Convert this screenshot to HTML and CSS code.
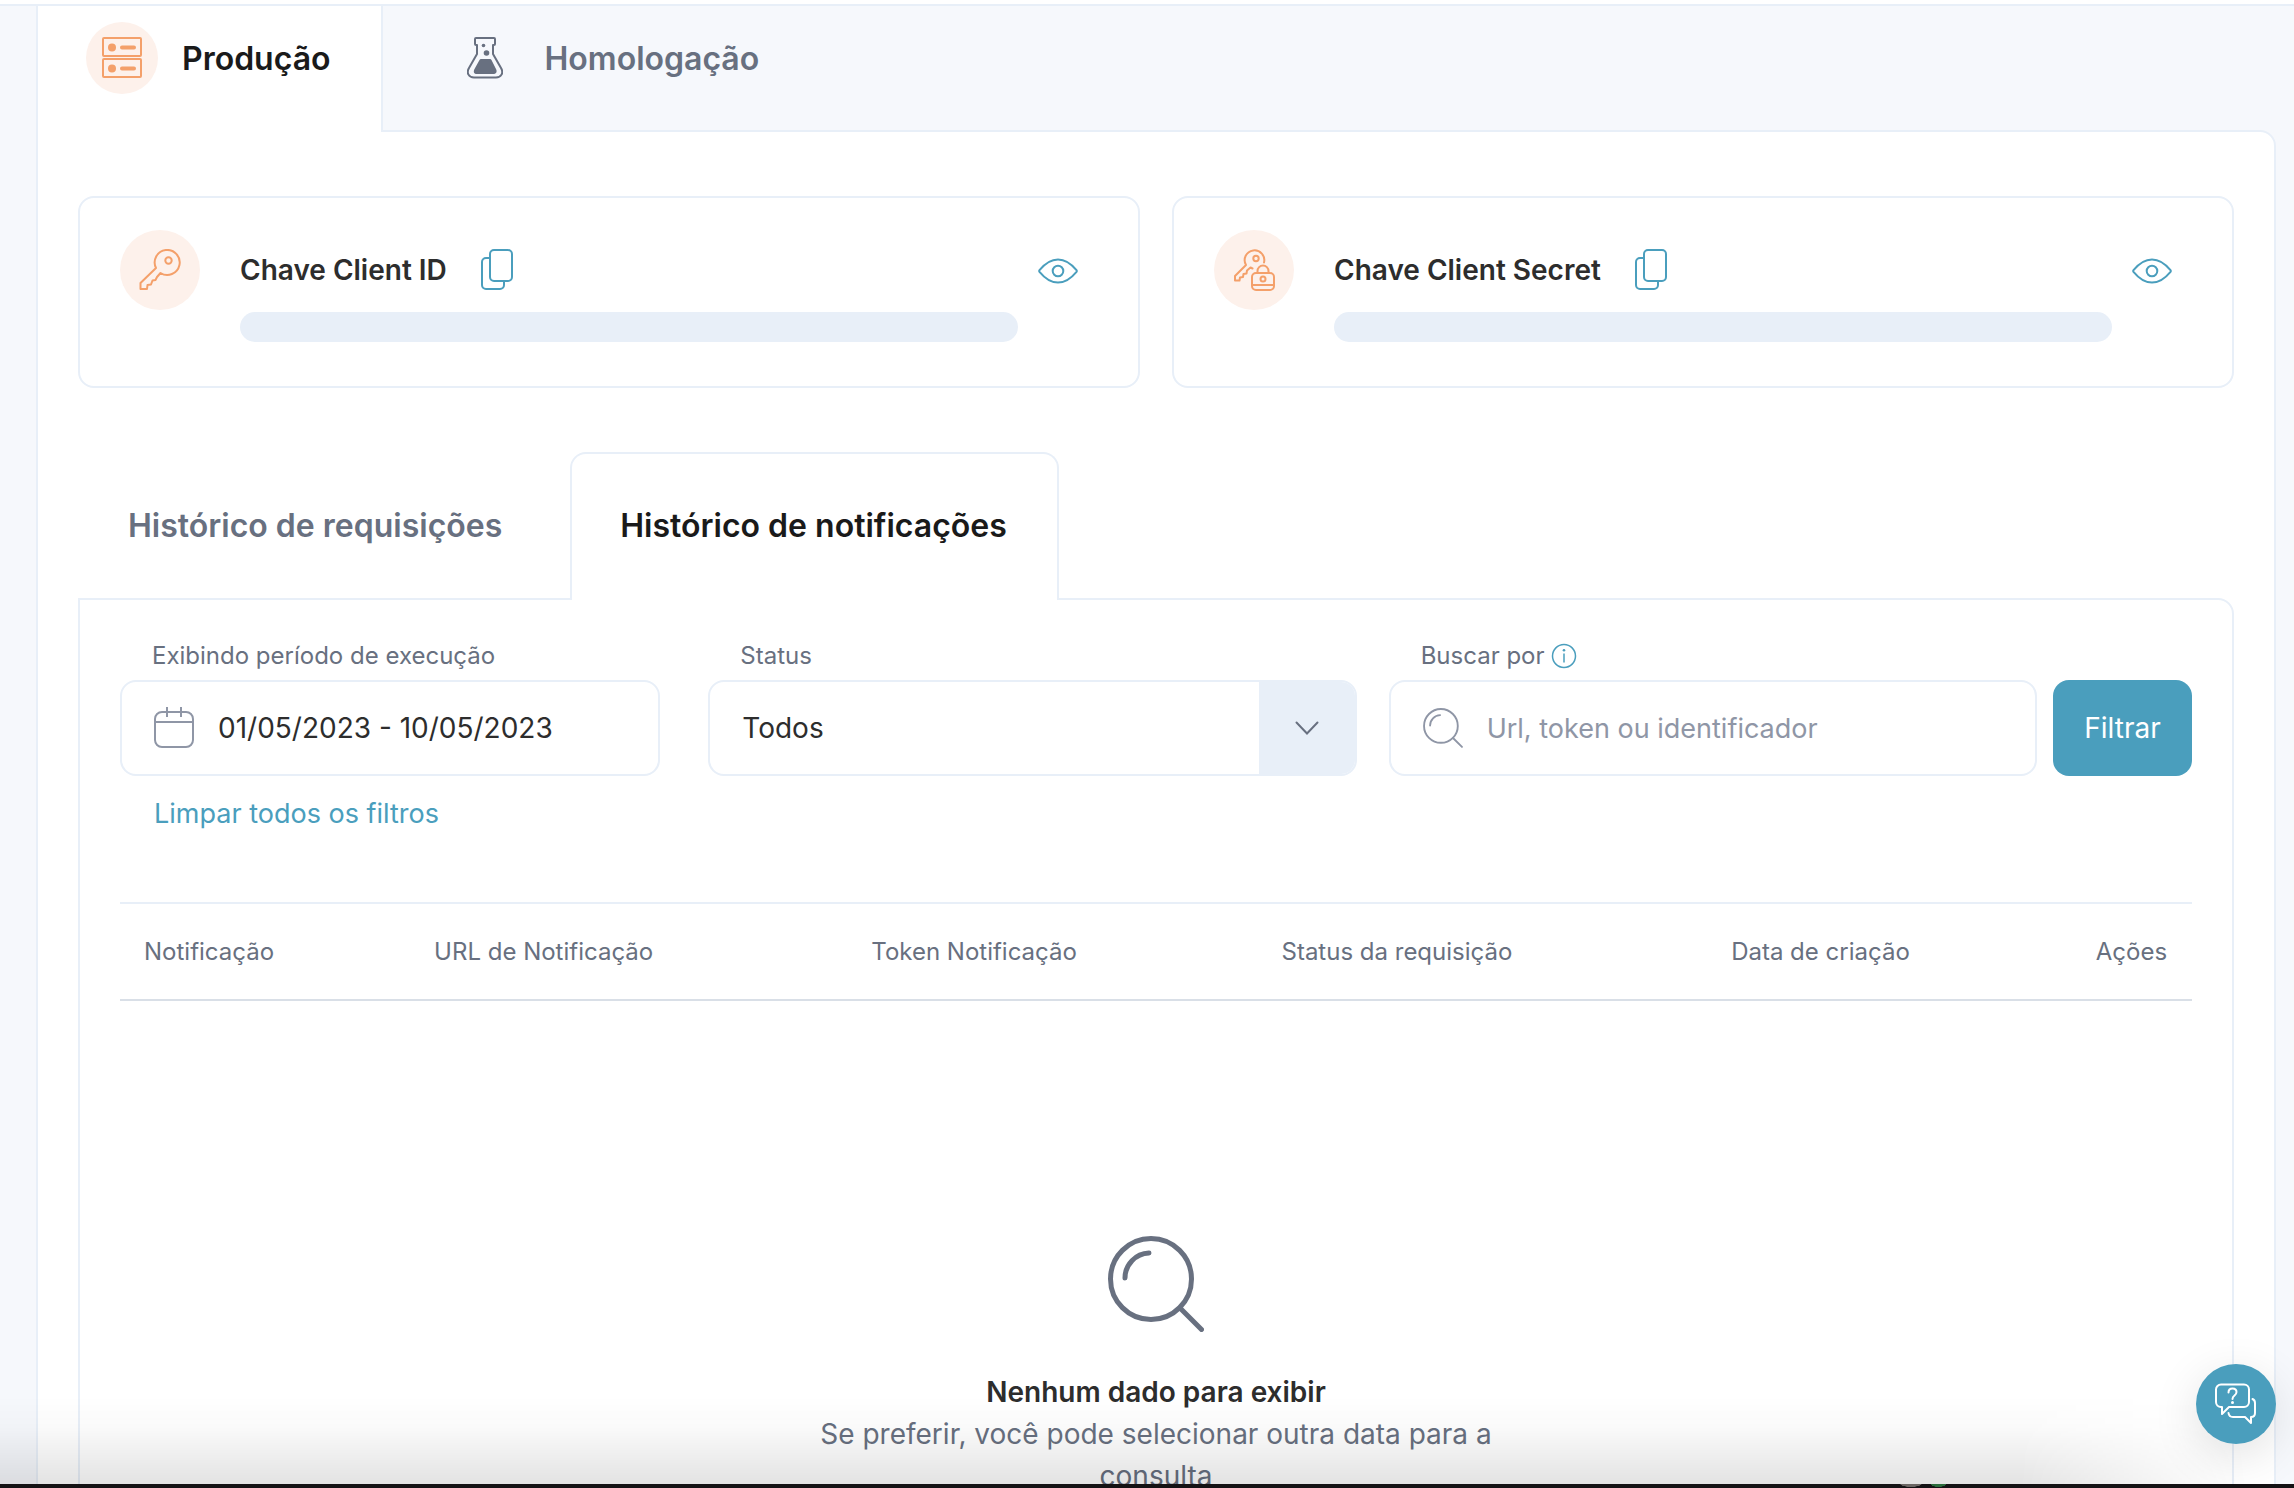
FILE: index.html
```html
<!DOCTYPE html>
<html lang="pt-BR">
<head>
<meta charset="utf-8">
<meta name="viewport" content="width=device-width, initial-scale=1">
<title>Credenciais da API</title>
<link rel="stylesheet" href="styles.css">
</head>
<body>
<main class="page">
  <nav class="env-tabs" aria-label="Ambiente">
    <button class="env-tab env-tab-active" type="button">
      <span class="env-icon env-icon-active">
        <svg width="40" height="42" viewBox="0 0 40 42" fill="none" stroke="currentColor" stroke-width="2">
          <rect x="1" y="1" width="38" height="18" rx="1"/><rect x="1" y="22" width="38" height="18" rx="1"/>
          <path d="M20 10.500h12M20 31.500h12" stroke-width="4" stroke-linecap="round"/>
          <circle cx="10" cy="10.500" r="4" fill="currentColor" stroke="none"/><circle cx="10" cy="31.500" r="4" fill="currentColor" stroke="none"/>
        </svg>
      </span>
      <span>Produção</span>
    </button>
    <button class="env-tab" type="button">
      <span class="env-icon">
        <svg width="36" height="42" viewBox="0 0 36 42" fill="none" stroke="currentColor" stroke-width="2" stroke-linejoin="round">
          <path d="M9 1h18q1 0 1 1v5q0 1-1 1h-1v9l8 14c3 5 0 9.500-5 9.500H7c-5 0-8-4.500-5-9.500l8-14V8H9q-1 0-1-1V2q0-1 1-1z"/>
          <path d="M14 22h9q1 0 1.500 1l4.500 9c1.500 3 0 5-3 5H10c-3 0-4-2-2.500-5l5-9q.5-1 1.500-1z" fill="currentColor" stroke="none"/>
          <circle cx="16.500" cy="8.500" r="1.800" fill="currentColor" stroke="none"/><circle cx="19.500" cy="16" r="2.800" fill="currentColor" stroke="none"/>
        </svg>
      </span>
      <span>Homologação</span>
    </button>
  </nav>

  <section class="env-panel">
    <div class="keys">
      <article class="key-card">
        <span class="key-icon">
          <svg width="42" height="42" viewBox="0 0 42 42" fill="none" stroke="currentColor" stroke-width="2" stroke-linejoin="round">
            <path d="M17 19A12.500 12.500 0 1 1 21.500 24L18 28l-1.500 3-3 .5-1.500 4-3.500.5-.5 4H1.500v-6z"/>
            <circle cx="29.500" cy="11.500" r="3.200"/>
          </svg>
        </span>
        <div class="key-body">
          <div class="key-title">
            <h2>Chave Client ID</h2>
            <button class="icon-button" type="button" aria-label="Copiar">
              <svg width="32" height="42" viewBox="0 0 32 42" fill="none" stroke="currentColor" stroke-width="2">
                <rect x="9" y="1" width="22" height="31" rx="4"/><path d="M9 9H5a4 4 0 0 0-4 4v23a4 4 0 0 0 4 4h14a4 4 0 0 0 4-4v-4"/>
              </svg>
            </button>
          </div>
          <div class="key-mask"></div>
        </div>
        <button class="icon-button key-reveal" type="button" aria-label="Mostrar">
          <svg width="40" height="26" viewBox="0 0 40 26" fill="none" stroke="currentColor" stroke-width="2">
            <path d="M1.500 13.800q-.6-.8 0-1.600C7 5.500 13 1.500 20 1.500s13 4 18.500 10.700q.6.800 0 1.600C33 20.500 27 24.500 20 24.500S7 20.500 1.500 13.800z"/><circle cx="20" cy="13" r="5.300"/>
          </svg>
        </button>
      </article>
      <article class="key-card">
        <span class="key-icon">
          <svg width="42" height="42" viewBox="0 0 42 42" fill="none" stroke="currentColor" stroke-width="2" stroke-linejoin="round" stroke-linecap="round">
            <path d="M31 13.500A9.800 9.800 0 1 0 13 16L2 27v4.500h4.500l.5-3 3-.5.5-3 3-.5.5-3 3.500-3 2 1"/>
            <circle cx="23" cy="9.500" r="2.700"/>
            <rect x="19" y="24" width="22" height="17" rx="4"/><path d="M19 36h22M24.500 24v-2a5.500 5.500 0 0 1 11 0v2"/><circle cx="30" cy="30" r="2.500"/>
          </svg>
        </span>
        <div class="key-body">
          <div class="key-title">
            <h2>Chave Client Secret</h2>
            <button class="icon-button" type="button" aria-label="Copiar">
              <svg width="32" height="42" viewBox="0 0 32 42" fill="none" stroke="currentColor" stroke-width="2">
                <rect x="9" y="1" width="22" height="31" rx="4"/><path d="M9 9H5a4 4 0 0 0-4 4v23a4 4 0 0 0 4 4h14a4 4 0 0 0 4-4v-4"/>
              </svg>
            </button>
          </div>
          <div class="key-mask"></div>
        </div>
        <button class="icon-button key-reveal" type="button" aria-label="Mostrar">
          <svg width="40" height="26" viewBox="0 0 40 26" fill="none" stroke="currentColor" stroke-width="2">
            <path d="M1.500 13.800q-.6-.8 0-1.600C7 5.500 13 1.500 20 1.500s13 4 18.500 10.700q.6.800 0 1.600C33 20.500 27 24.500 20 24.500S7 20.500 1.500 13.800z"/><circle cx="20" cy="13" r="5.300"/>
          </svg>
        </button>
      </article>
    </div>

    <nav class="history-tabs" aria-label="Histórico">
      <button class="history-tab" type="button">Histórico de requisições</button>
      <button class="history-tab history-tab-active" type="button">Histórico de notificações</button>
    </nav>

    <section class="history-panel">
      <form class="filters">
        <div class="field field-period">
          <label for="period">Exibindo período de execução</label>
          <div class="control">
            <svg class="control-icon" width="40" height="42" viewBox="0 0 40 42" fill="none" stroke="currentColor" stroke-width="2">
              <rect x="1" y="5" width="38" height="35" rx="7"/><path d="M1 15h38M13 0v10M27 0v10"/>
            </svg>
            <input id="period" type="text" value="01/05/2023 - 10/05/2023">
          </div>
        </div>
        <div class="field field-status">
          <label for="status">Status</label>
          <div class="control control-select">
            <select id="status"><option>Todos</option></select>
            <span class="select-arrow">
              <svg width="24" height="14" viewBox="0 0 24 14" fill="none" stroke="currentColor" stroke-width="2" stroke-linecap="round"><path d="M1.500 1.500L12 12.500 22.500 1.500"/></svg>
            </span>
          </div>
        </div>
        <div class="field field-search">
          <label for="search">Buscar por
            <svg class="info" width="26" height="26" viewBox="0 0 26 26" fill="none" stroke="currentColor" stroke-width="1.500">
              <circle cx="13" cy="13" r="11.500"/><path d="M13 10.500v9"/><circle cx="13" cy="7.300" r="1.300" fill="currentColor" stroke="none"/>
            </svg>
          </label>
          <div class="control">
            <svg class="control-icon" width="40" height="40" viewBox="0 0 96 96" fill="none" stroke="currentColor" stroke-width="4.500" stroke-linecap="round">
              <circle cx="43" cy="43" r="40.500"/><path d="M72 72l21.500 21.500M17 42a25 25 0 0 1 24-25"/>
            </svg>
            <input id="search" class="search-input" type="text" placeholder="Url, token ou identificador">
          </div>
        </div>
        <button class="submit" type="submit">Filtrar</button>
      </form>
      <a class="clear" href="#">Limpar todos os filtros</a>

      <table class="results">
        <colgroup><col class="c-notification"><col class="c-url"><col class="c-token"><col class="c-status"><col class="c-date"><col></colgroup>
        <thead>
          <tr><th>Notificação</th><th>URL de Notificação</th><th>Token Notificação</th><th>Status da requisição</th><th>Data de criação</th><th>Ações</th></tr>
        </thead>
      </table>

      <div class="empty">
        <svg width="96" height="96" viewBox="0 0 96 96" fill="none" stroke="currentColor" stroke-width="5" stroke-linecap="round">
          <circle cx="43" cy="43" r="40.500"/><path d="M72 72l21.500 21.500M17 42a25 25 0 0 1 24-25"/>
        </svg>
        <h3>Nenhum dado para exibir</h3>
        <p>Se preferir, você pode selecionar outra data para a consulta</p>
      </div>
    </section>
  </section>
</main>

<div class="bottom-shade"></div>
<div class="bottom-edge"></div>
<button class="help" type="button" aria-label="Ajuda">
  <svg width="42" height="42" viewBox="0 0 42 42" fill="none" stroke="currentColor" stroke-width="2" stroke-linejoin="round" stroke-linecap="round">
    <path d="M6 1.500h23a5 5 0 0 1 5 5V19a5 5 0 0 1-5 5H14l-7 7v-7H6a5 5 0 0 1-5-5V6.500a5 5 0 0 1 5-5z"/>
    <path d="M37.500 16q2.500 1 2.500 4v10q0 4-4 4v6l-6-6H18q-4 0-4.500-4"/>
    <path d="M13.500 9.500q0-4 4-4 4 0 4 3.500 0 2-2 3.500t-2 3.500" /><circle cx="17.500" cy="19.500" r="1.500" fill="currentColor" stroke="none"/>
  </svg>
</button>
</body>
</html>
```

FILE: styles.css
```css
:root {
  --page: #f6f8fc;
  --line: #e8eff8;
  --line-strong: #d9dfe7;
  --ink: #2d2d2d;
  --ink-strong: #1a1a1a;
  --muted: #687080;
  --soft: #8f96a6;
  --accent: #4a9ebd;
  --orange: #f4a06a;
  --orange-soft: #fdf1eb;
}

* { box-sizing: border-box; }

body {
  margin: 0;
  height: 100vh;
  overflow: hidden;
  background: var(--page);
  color: var(--ink);
  font-family: Inter, "Liberation Sans", sans-serif;
  font-size: 28px;
}

button, input, select { font: inherit; color: inherit; }
button { border: 0; padding: 0; background: none; cursor: pointer; }
h2, h3, p { margin: 0; }
svg { display: block; flex: none; }

.page {
  border-top: 4px solid #fff;
  padding: 0 18px 0 36px;
}

/* environment tabs */
.env-tabs {
  display: flex;
  margin: 0 -18px 0 -36px;
  padding-left: 36px;
  border-top: 2px solid var(--line);
}
.env-tab {
  display: flex;
  align-items: center;
  gap: 24px;
  padding: 16px 48px 36px 66px;
  color: var(--muted);
  font-size: 32px;
  font-weight: 600;
}
.env-tab-active {
  position: relative;
  margin-bottom: -2px;
  padding: 16px 50px 38px 48px;
  border: solid var(--line);
  border-width: 0 2px;
  background: #fff;
  color: var(--ink-strong);
}
.env-icon {
  display: grid;
  place-items: center;
  width: 72px;
  height: 72px;
  border-radius: 50%;
}
.env-icon-active { background: var(--orange-soft); color: var(--orange); }

.env-panel {
  padding: 64px 40px 0;
  border: 2px solid var(--line);
  border-radius: 0 16px 0 0;
  background: #fff;
}

/* key cards */
.keys {
  display: grid;
  grid-template-columns: 1fr 1fr;
  gap: 32px;
}
.key-card {
  display: flex;
  align-items: flex-start;
  padding: 32px 60px 44px 40px;
  border: 2px solid var(--line);
  border-radius: 16px;
}
.key-icon {
  display: grid;
  place-items: center;
  width: 80px;
  height: 80px;
  border-radius: 50%;
  background: var(--orange-soft);
  color: var(--orange);
}
.key-body { flex: 1; margin: 20px 20px 0 40px; }
.key-title { display: flex; align-items: center; gap: 34px; height: 40px; }
.key-title h2 { font-size: 28px; font-weight: 600; }
.key-mask { height: 30px; margin-top: 22px; border-radius: 15px; background: var(--line); }
.icon-button { color: var(--accent); }
.key-reveal { margin-top: 28px; }

/* history tabs */
.history-tabs { display: flex; margin-top: 64px; }
.history-tab {
  padding: 54px 68px 52px 50px;
  color: var(--muted);
  font-size: 32px;
  font-weight: 600;
  line-height: 40px;
}
.history-tab-active {
  position: relative;
  margin-bottom: -2px;
  padding: 52px 50px 54px 48px;
  border: 2px solid var(--line);
  border-bottom: 0;
  border-radius: 16px 16px 0 0;
  background: #fff;
  color: var(--ink-strong);
}
.history-panel {
  padding: 40px;
  border: 2px solid var(--line);
  border-radius: 0 16px 0 0;
}

/* filters */
.filters { display: flex; align-items: flex-end; }
.field-period { flex: 540; margin-right: 48px; }
.field-status { flex: 648; margin-right: 32px; }
.field-search { flex: 648; margin-right: 16px; }
.field { min-width: 0; }
.field label {
  display: flex;
  align-items: center;
  gap: 6px;
  margin-bottom: 8px;
  padding-left: 32px;
  color: var(--muted);
  font-size: 24px;
  line-height: 32px;
}
.info { color: var(--accent); }
.control {
  display: flex;
  align-items: center;
  gap: 24px;
  height: 96px;
  padding: 0 32px;
  overflow: hidden;
  border: 2px solid var(--line);
  border-radius: 16px;
  background: #fff;
}
.control-icon { color: var(--soft); }
.control input, .control select {
  flex: 1;
  min-width: 0;
  height: 92px;
  padding: 0;
  border: 0;
  outline: 0;
  background: none;
}
.control input::placeholder { color: var(--soft); opacity: 1; }
.control .search-input { font-size: 27px; }
.control-select { padding-right: 0; }
.control select { appearance: none; }
.select-arrow {
  display: grid;
  place-items: center;
  width: 96px;
  height: 92px;
  background: var(--line);
  color: var(--muted);
}
.submit {
  width: 139px;
  height: 96px;
  border-radius: 16px;
  background: var(--accent);
  color: #fff;
}
.clear {
  display: block;
  width: fit-content;
  margin: 18px 0 0 34px;
  color: var(--accent);
  font-size: 27px;
  line-height: 40px;
  text-decoration: none;
}

/* results */
.results {
  width: 100%;
  margin-top: 68px;
  border-collapse: separate;
  border-spacing: 0;
  table-layout: fixed;
}
.results th {
  height: 99px;
  padding: 0 0 0 24px;
  border-top: 2px solid var(--line);
  border-bottom: 2px solid var(--line-strong);
  color: var(--muted);
  font-size: 24px;
  font-weight: 400;
  text-align: left;
}
.c-notification { width: 14%; }
.c-url { width: 21.1%; }
.c-token { width: 19.8%; }
.c-status { width: 21.7%; }
.c-date { width: 17.6%; }

.empty {
  display: flex;
  flex-direction: column;
  align-items: center;
  max-width: 704px;
  margin: 235px auto 80px;
  color: var(--muted);
  line-height: 42px;
  text-align: center;
}
.empty h3 { margin-top: 39px; color: var(--ink); font-size: 28px; font-weight: 600; }

/* fixed overlays */
.bottom-shade {
  position: fixed;
  inset: auto 0 4px;
  height: 88px;
  background: linear-gradient(transparent, rgba(0, 0, 0, .02) 35%, rgba(0, 0, 0, .11));
  mask-image: linear-gradient(90deg, #000 88%, transparent 98%);
  pointer-events: none;
}
.bottom-edge {
  position: fixed;
  inset: auto 0 0;
  height: 4px;
  background:
    radial-gradient(ellipse 11px 3px at 83.3% 0, #6b6663 90%, transparent),
    radial-gradient(ellipse 8px 3px at 84.5% 0, #2c6b3c 90%, transparent),
    #141214;
}
.help {
  position: fixed;
  right: 18px;
  bottom: 44px;
  display: grid;
  place-items: center;
  width: 80px;
  height: 80px;
  border-radius: 50%;
  background: var(--accent);
  box-shadow: 0 12px 48px rgba(0, 0, 0, .12);
  color: #fff;
}
```
